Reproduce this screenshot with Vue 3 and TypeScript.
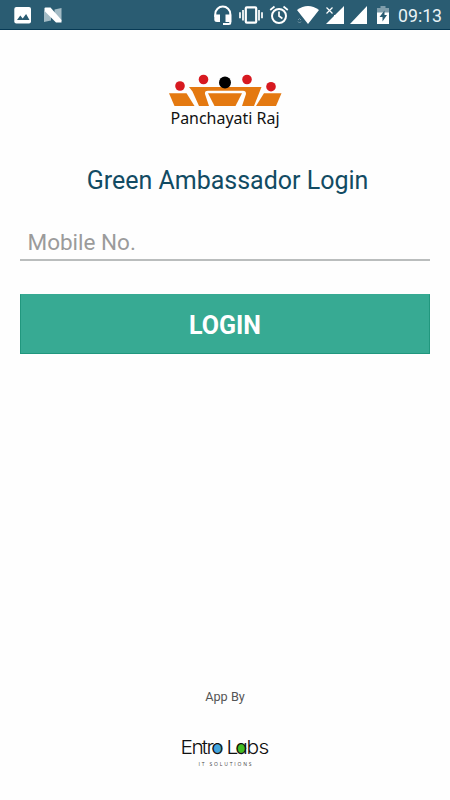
<script setup lang="ts">
import { ref } from 'vue'

const mobile = ref<string>('')
const time = '09:13'
</script>

<template>
  <main class="screen">
    <header class="status">
      <svg class="image" width="18" height="30" viewBox="0 0 18 30">
        <rect x="0.3" y="7" width="16.700" height="16.5" rx="2" fill="#fff" />
        <path d="M3 20l3.3-4.6 2.4 3 3.4-4.4L15.5 20z" fill="#2a5c72" />
      </svg>
      <svg class="nougat" width="20" height="30" viewBox="0 0 20 30">
        <path d="M1 10.500l7 4v6l-7 1.500zM18.500 8v13l-7-4v-7.500z" fill="#a3bbc5" />
        <path d="M1.500 8.500q0-1 1-1H7.500L18.500 20v2.500H13L1.500 11z" fill="#fff" />
      </svg>
      <svg class="headset" width="18" height="30" viewBox="0 0 18 30">
        <path d="M1.300 17v-3a7.500 7.500 0 0 1 15 0V22.500q0 1.500-1.500 1.500H9" fill="none" stroke="#fff" stroke-width="2" />
        <path d="M.3 14.500H6V22H3Q.3 22 .3 19.500zM11.500 14.500h5.800V22h-5.800z" fill="#fff" />
      </svg>
      <svg class="vibrate" width="24" height="30" viewBox="0 0 24 30">
        <rect x="6.800" y="7.300" width="10.400" height="15.400" rx="1" fill="none" stroke="#fff" stroke-width="2.200" />
        <path d="M1 12.300v6M4 10v10.500M20 10v10.500M23 12.300v6" stroke="#fff" stroke-width="1.700" />
      </svg>
      <svg class="alarm" width="20" height="30" viewBox="0 0 20 30">
        <circle cx="10" cy="16" r="7" fill="none" stroke="#fff" stroke-width="2" />
        <path d="M1.200 10l4.300-3.500M18.800 10l-4.300-3.500M10 11.500V16l3.400 2.500" fill="none" stroke="#fff" stroke-width="1.700" />
      </svg>
      <svg class="wifi" width="24" height="30" viewBox="0 0 24 30">
        <path d="M1 10Q12 2 23 10L12 24z" fill="#fff" />
        <path d="M2 20l1.500-1.500L5 20M2 21.500L3.500 23 5 21.500" fill="none" stroke="#7898a6" />
      </svg>
      <svg class="signal" width="20" height="30" viewBox="0 0 20 30">
        <path d="M19 6v18H1l8-8V15h1z" fill="#fff" />
        <path d="M1.500 7.500l6 6M7.500 7.500l-6 6" stroke="#fff" stroke-width="1.200" />
      </svg>
      <svg class="signal-full" width="18" height="30" viewBox="0 0 18 30">
        <path d="M17 6v18H0z" fill="#fff" />
      </svg>
      <svg class="battery" width="12" height="30" viewBox="0 0 12 30">
        <path d="M0 8h3.500V6h5v2H12v5H0z" fill="#7f9dab" />
        <path d="M0 12.500h12V24H0z" fill="#fff" />
        <path d="M7.500 10.500l-5 6.500h3v4.500l4.500-6.500H7.500z" fill="#2a5c72" />
      </svg>
      <span class="time">{{ time }}</span>
    </header>

    <svg class="emblem" width="140" height="66" viewBox="0 0 140 66">
      <g fill="#e47911">
        <path d="M14 28.200h17.500L39.500 41H19.500z" />
        <path d="M34 22h72.500L99 41H87l4-12q0-3.200-3-3.200H53q-3.500 0-3 3.200l4 12H44L37.500 26.500z" />
        <path d="M53 28.200h34L80.500 41H59.500z" />
        <path d="M109 28.200h17.500L121 41h-20z" />
      </g>
      <g fill="#d71920">
        <circle cx="25" cy="21" r="4.800" />
        <circle cx="48.500" cy="14.500" r="4.800" />
        <circle cx="92" cy="14.500" r="4.800" />
        <circle cx="116" cy="21.700" r="4.800" />
      </g>
      <circle cx="70" cy="17.600" r="6" fill="#000" />
      <text x="15.500" y="59.300" textLength="109" lengthAdjust="spacingAndGlyphs">Panchayati Raj</text>
    </svg>

    <h1>Green Ambassador Login</h1>
    <form @submit.prevent>
      <input v-model="mobile" type="tel" placeholder="Mobile No." aria-label="Mobile No." />
      <button type="submit">LOGIN</button>
    </form>

    <footer>
      <p>App By</p>
      <svg class="entro" width="98" height="38" viewBox="0 0 98 38">
        <circle cx="41.300" cy="16.300" r="4.800" fill="#42a5dc" />
        <circle cx="65.500" cy="16.300" r="4.800" fill="#42bd22" />
        <text class="brand" transform="scale(1.12 1)" x="4 13.800 22.900 27.300 31.400 41 45 52.900 63 73.700" y="22">Entro Labs</text>
        <text class="tagline" x="22.500" y="33.500" textLength="53">IT SOLUTIONS</text>
      </svg>
    </footer>
  </main>
</template>

<style>
body {
  margin: 0;
  background: #fefefe;
}
</style>

<style scoped>
.screen {
  width: 450px;
  height: 800px;
  display: flex;
  flex-direction: column;
  align-items: center;
  background: #fefefe;
  font-family: Roboto, sans-serif;
}
.status {
  box-sizing: border-box;
  width: 100%;
  height: 30px;
  display: flex;
  padding-left: 14px;
  background: #2a5c72;
  border-bottom: 1px solid #073a55;
  flex: none;
}
.status svg { flex: none; }
.nougat { margin-left: 11px; }
.headset { margin-left: 151px; }
.vibrate { margin-left: 7px; }
.alarm { margin-left: 6px; }
.wifi { margin-left: 7px; }
.signal { margin-left: 5px; }
.signal-full { margin-left: 5px; }
.battery { margin-left: 9px; }
.time {
  margin-left: 9px;
  font-size: 17.7px;
  line-height: 32px;
  color: #e9f3f6;
}
.emblem {
  margin-top: 35px;
  flex: none;
}
.emblem text {
  font-family: "Noto Sans", sans-serif;
  font-size: 16.5px;
  fill: #111;
}
h1 {
  margin: 34px 0 0 5px;
  font-size: 25px;
  font-weight: 400;
  line-height: 32px;
  color: #124b63;
}
form {
  width: 410px;
  display: flex;
  flex-direction: column;
}
input {
  box-sizing: border-box;
  height: 46px;
  margin-top: 18px;
  padding: 10px 7.5px 0;
  border: 0;
  border-bottom: 2px solid #babdbd;
  border-radius: 0;
  outline: 0;
  background: transparent;
  font: 22.5px Roboto, sans-serif;
}
input::placeholder {
  color: #9b9b9b;
  opacity: 1;
}
button {
  height: 60px;
  margin-top: 33px;
  padding: 2px 0 0;
  border: 1px solid #21977e;
  border-top-color: #37aa93;
  background: #37aa93;
  color: #fff;
  font: 700 25px Roboto, sans-serif;
}
footer {
  margin-top: auto;
  padding-bottom: 30px;
  display: flex;
  flex-direction: column;
  align-items: center;
}
footer p {
  margin: 0 0 27px;
  font-size: 12.7px;
  line-height: 16px;
  color: #555;
}
.brand {
  font-family: Inter, sans-serif;
  font-feature-settings: "cv11" 1;
  font-size: 18.7px;
  font-weight: 300;
  fill: #111;
}
.tagline {
  font-family: "Open Sans", sans-serif;
  font-size: 5px;
  fill: #444;
}
</style>
